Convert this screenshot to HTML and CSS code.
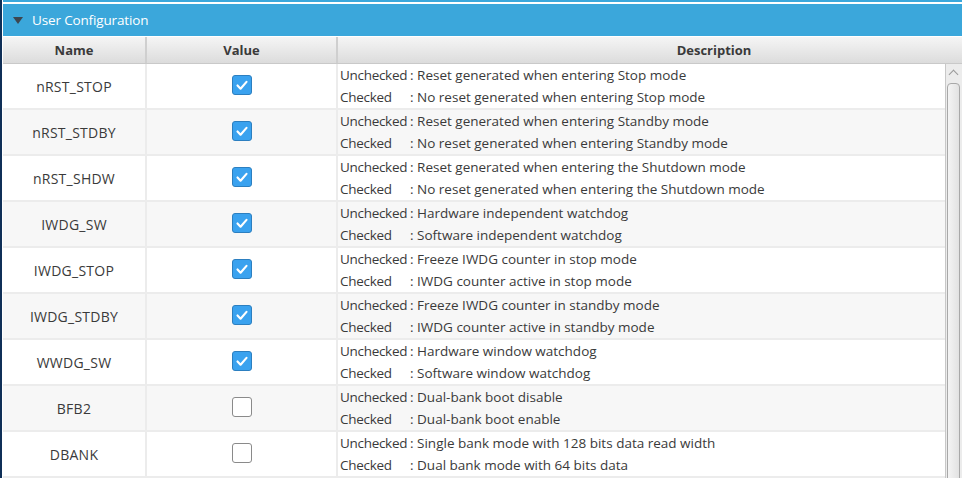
FILE: index.html
```html
<!DOCTYPE html>
<html>
<head>
<meta charset="utf-8">
<link rel="stylesheet" href="styles.css">
</head>
<body>
<div class="frame">
  <div class="edge"></div>
  <div class="main">
    <div class="topline"></div>
    <div class="section">
      <span class="tri"></span>
      <span class="title">User Configuration</span>
    </div>
    <div class="thead">
      <div class="th c-name">Name</div>
      <div class="th c-val">Value</div>
      <div class="th c-desc">Description</div>
    </div>
    <div class="tbody">
      <div class="rows">
        <div class="row">
          <div class="td c-name">nRST_STOP</div>
          <div class="td c-val"><span class="cb on"><svg viewBox="0 0 20 20"><path d="M5 10.5l3.4 3.6L15 6.5"/></svg></span></div>
          <div class="td c-desc"><div><span class="lbl">Unchecked</span>: Reset generated when entering Stop mode</div><div><span class="lbl">Checked</span>: No reset generated when entering Stop mode</div></div>
        </div>
        <div class="row alt">
          <div class="td c-name">nRST_STDBY</div>
          <div class="td c-val"><span class="cb on"><svg viewBox="0 0 20 20"><path d="M5 10.5l3.4 3.6L15 6.5"/></svg></span></div>
          <div class="td c-desc"><div><span class="lbl">Unchecked</span>: Reset generated when entering Standby mode</div><div><span class="lbl">Checked</span>: No reset generated when entering Standby mode</div></div>
        </div>
        <div class="row">
          <div class="td c-name">nRST_SHDW</div>
          <div class="td c-val"><span class="cb on"><svg viewBox="0 0 20 20"><path d="M5 10.5l3.4 3.6L15 6.5"/></svg></span></div>
          <div class="td c-desc"><div><span class="lbl">Unchecked</span>: Reset generated when entering the Shutdown mode</div><div><span class="lbl">Checked</span>: No reset generated when entering the Shutdown mode</div></div>
        </div>
        <div class="row alt">
          <div class="td c-name">IWDG_SW</div>
          <div class="td c-val"><span class="cb on"><svg viewBox="0 0 20 20"><path d="M5 10.5l3.4 3.6L15 6.5"/></svg></span></div>
          <div class="td c-desc"><div><span class="lbl">Unchecked</span>: Hardware independent watchdog</div><div><span class="lbl">Checked</span>: Software independent watchdog</div></div>
        </div>
        <div class="row">
          <div class="td c-name">IWDG_STOP</div>
          <div class="td c-val"><span class="cb on"><svg viewBox="0 0 20 20"><path d="M5 10.5l3.4 3.6L15 6.5"/></svg></span></div>
          <div class="td c-desc"><div><span class="lbl">Unchecked</span>: Freeze IWDG counter in stop mode</div><div><span class="lbl">Checked</span>: IWDG counter active in stop mode</div></div>
        </div>
        <div class="row alt">
          <div class="td c-name">IWDG_STDBY</div>
          <div class="td c-val"><span class="cb on"><svg viewBox="0 0 20 20"><path d="M5 10.5l3.4 3.6L15 6.5"/></svg></span></div>
          <div class="td c-desc"><div><span class="lbl">Unchecked</span>: Freeze IWDG counter in standby mode</div><div><span class="lbl">Checked</span>: IWDG counter active in standby mode</div></div>
        </div>
        <div class="row">
          <div class="td c-name">WWDG_SW</div>
          <div class="td c-val"><span class="cb on"><svg viewBox="0 0 20 20"><path d="M5 10.5l3.4 3.6L15 6.5"/></svg></span></div>
          <div class="td c-desc"><div><span class="lbl">Unchecked</span>: Hardware window watchdog</div><div><span class="lbl">Checked</span>: Software window watchdog</div></div>
        </div>
        <div class="row alt">
          <div class="td c-name">BFB2</div>
          <div class="td c-val"><span class="cb"></span></div>
          <div class="td c-desc"><div><span class="lbl">Unchecked</span>: Dual-bank boot disable</div><div><span class="lbl">Checked</span>: Dual-bank boot enable</div></div>
        </div>
        <div class="row">
          <div class="td c-name">DBANK</div>
          <div class="td c-val"><span class="cb"></span></div>
          <div class="td c-desc"><div><span class="lbl">Unchecked</span>: Single bank mode with 128 bits data read width</div><div><span class="lbl">Checked</span>: Dual bank mode with 64 bits data</div></div>
        </div>
      </div>
      <div class="scroll">
        <div class="up"></div>
        <div class="thumb"></div>
      </div>
    </div>
  </div>
</div>
</body>
</html>
```

FILE: styles.css
```css
html, body {
  margin: 0;
  padding: 0;
  background: #ffffff;
  overflow: hidden;
  width: 962px;
  height: 478px;
}
.frame {
  display: flex;
  height: 478px;
  font-family: "Open Sans", "Noto Sans", sans-serif;
  color: #3a3a3a;
}
.edge {
  width: 2px;
  background: #0f2f57;
  flex: none;
}
.main {
  flex: 1;
  margin-left: 1px;
  display: flex;
  flex-direction: column;
  overflow: hidden;
}
.topline {
  height: 2px;
  background: #3ba7db;
  margin-bottom: 2px;
}
.section {
  height: 32px;
  background: #3ba7db;
  display: flex;
  align-items: center;
  flex: none;
}
.tri {
  width: 0;
  height: 0;
  border-left: 5px solid transparent;
  border-right: 5px solid transparent;
  border-top: 7px solid #3d4650;
  margin-left: 10px;
  margin-right: 9px;
  margin-top: 1px;
}
.title {
  color: #ffffff;
  font-size: 13.5px;
  letter-spacing: -0.15px;
}
.thead {
  display: flex;
  height: 28px;
  flex: none;
  background: linear-gradient(#f5f5f5, #dcdcdc);
  border-bottom: 1px solid #c9c9c9;
  box-sizing: border-box;
  border-top: 1px solid #ffffff;
}
.th {
  font-weight: bold;
  font-size: 13px;
  color: #3a3a3a;
  display: flex;
  align-items: center;
  justify-content: center;
  box-sizing: border-box;
}
.thead .c-name, .thead .c-val {
  border-right: 2px solid #cfcfcf;
}
.c-name { width: 144px; flex: none; }
.c-val { width: 191px; flex: none; }
.thead .c-desc { width: 752px; flex: none; }
.tbody {
  flex: 1;
  display: flex;
  overflow: hidden;
}
.rows {
  flex: 1;
  overflow: hidden;
}
.row {
  display: flex;
  height: 46px;
  box-sizing: border-box;
  border-bottom: 2px solid #ececec;
  background: #ffffff;
}
.row.alt {
  background: #f7f7f7;
}
.td {
  box-sizing: border-box;
  font-size: 13.5px;
}
.td.c-name, .td.c-val {
  border-right: 2px solid #ececec;
  display: flex;
  align-items: center;
  justify-content: center;
}
.td.c-name {
  padding-top: 1px;
  font-size: 14px;
  letter-spacing: 0.25px;
}
.td.c-desc {
  flex: 1;
  padding-left: 2px;
  line-height: 22px;
  white-space: nowrap;
}
.lbl {
  display: inline-block;
  width: 70px;
  letter-spacing: -0.3px;
}
.cb {
  width: 18px;
  height: 18px;
  border: 1px solid #8a8a8a;
  border-radius: 3px;
  background: #ffffff;
  display: block;
  margin-top: -2px;
}
.cb.on {
  background: #3aa2ef;
  border-color: #2c7fc0;
}
.cb svg {
  width: 18px;
  height: 18px;
  display: block;
}
.cb path {
  fill: none;
  stroke: #ffffff;
  stroke-width: 2.4;
  stroke-linecap: round;
  stroke-linejoin: round;
}
.scroll {
  width: 17px;
  flex: none;
  background: #ececec;
  border-left: 1px solid #c8c8c8;
  position: relative;
  box-sizing: border-box;
}
.up {
  width: 6px;
  height: 6px;
  border-left: 1px solid #9a9a9a;
  border-top: 1px solid #9a9a9a;
  transform: rotate(45deg);
  margin: 7px 0 0 4px;
}
.thumb {
  margin: 5px 0 0 1px;
  width: 11px;
  height: 420px;
  border: 1px solid #a8a8a8;
  border-radius: 4px 4px 0 0;
  background: linear-gradient(90deg, #f4f4f4, #e2e2e2);
}
```
